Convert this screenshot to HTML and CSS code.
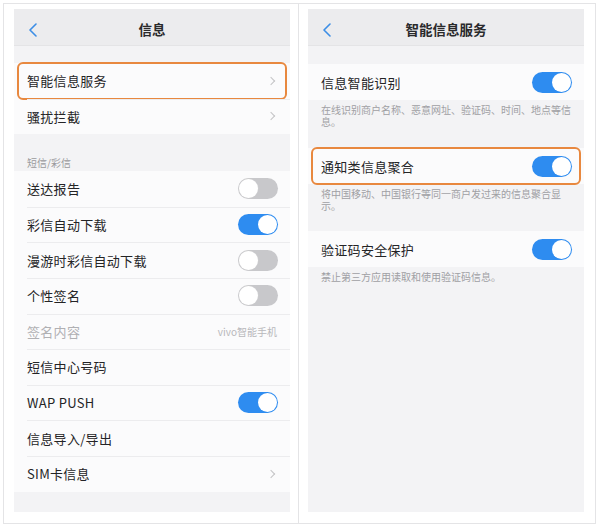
FILE: index.html
```html
<!DOCTYPE html>
<html lang="zh-CN">
<head>
<meta charset="utf-8">
<link rel="stylesheet" href="styles.css">
</head>
<body>
<div class="frame">
  <div class="panel panel-left">
    <div class="screen">
      <div class="header">
        <svg class="back" width="10" height="14" viewBox="0 0 10 14"><path d="M8 1 L2 7 L8 13" fill="none" stroke="#3c8ee6" stroke-width="1.6" stroke-linecap="round" stroke-linejoin="round"/></svg>
        <div class="title">信息</div>
      </div>
      <div class="gap-top"></div>
      <div class="group">
        <div class="row hl"><span class="label">智能信息服务</span><span class="chev"></span></div>
        <div class="row"><span class="label">骚扰拦截</span><span class="chev"></span></div>
      </div>
      <div class="section-label">短信/彩信</div>
      <div class="group">
        <div class="row"><span class="label">送达报告</span><span class="toggle"></span></div>
        <div class="row"><span class="label">彩信自动下载</span><span class="toggle on"></span></div>
        <div class="row"><span class="label">漫游时彩信自动下载</span><span class="toggle"></span></div>
        <div class="row"><span class="label">个性签名</span><span class="toggle"></span></div>
        <div class="row"><span class="label dim">签名内容</span><span class="value">vivo智能手机</span></div>
        <div class="row"><span class="label">短信中心号码</span></div>
        <div class="row"><span class="label">WAP PUSH</span><span class="toggle on"></span></div>
        <div class="row"><span class="label">信息导入/导出</span></div>
        <div class="row"><span class="label">SIM卡信息</span><span class="chev"></span></div>
      </div>
    </div>
  </div>
  <div class="panel panel-right">
    <div class="screen">
      <div class="header">
        <svg class="back" width="10" height="14" viewBox="0 0 10 14"><path d="M8 1 L2 7 L8 13" fill="none" stroke="#3c8ee6" stroke-width="1.6" stroke-linecap="round" stroke-linejoin="round"/></svg>
        <div class="title">智能信息服务</div>
      </div>
      <div class="gap-top r"></div>
      <div class="row single"><span class="label">信息智能识别</span><span class="toggle on"></span></div>
      <div class="desc first">在线识别商户名称、恶意网址、验证码、时间、地点等信息。</div>
      <div class="row single hl"><span class="label">通知类信息聚合</span><span class="toggle on"></span></div>
      <div class="desc">将中国移动、中国银行等同一商户发过来的信息聚合显示。</div>
      <div class="row single"><span class="label">验证码安全保护</span><span class="toggle on"></span></div>
      <div class="desc">禁止第三方应用读取和使用验证码信息。</div>
    </div>
  </div>
</div>
</body>
</html>
```

FILE: styles.css
```css
* { box-sizing: border-box; }
html, body { margin: 0; padding: 0; background: #ffffff; }
body {
  font-family: "Noto Sans CJK SC", "Noto Sans", sans-serif;
  color: #242426;
}
.frame {
  margin: 3px 0 0 3px;
  width: 593px;
  height: 521px;
  border: 1px solid #e4e4e6;
  display: flex;
}
.panel {
  height: 100%;
  padding-top: 5px;
}
.panel-left {
  width: 295px;
  padding-left: 10px;
  border-right: 1px solid #e4e4e6;
}
.panel-right {
  flex: 1;
  padding-left: 9px;
}
.screen {
  width: 276px;
  height: 503px;
  background: #f3f3f5;
  display: flex;
  flex-direction: column;
  overflow: hidden;
}
.header {
  position: relative;
  height: 37px;
  background: #ececee;
  border-bottom: 1px solid #e4e4e6;
  display: flex;
  align-items: center;
  justify-content: center;
  flex-shrink: 0;
}
.back {
  position: absolute;
  left: 14px;
  top: 14px;
}
.title {
  font-size: 13.5px;
  font-weight: 700;
  color: #2a2a2c;
  margin-top: 4px;
}
.gap-top { height: 17px; flex-shrink: 0; }
.gap-top.r { height: 18px; }
.group { background: #fbfbfc; flex-shrink: 0; }
.row {
  position: relative;
  height: 35.6px;
  display: flex;
  align-items: center;
  justify-content: space-between;
  padding: 0 12px 0 13px;
  font-size: 13px;
  flex-shrink: 0;
}
.group .row + .row::before {
  content: "";
  position: absolute;
  left: 13px;
  right: 0;
  top: 0;
  border-top: 1px solid #ececee;
}
.row.single { background: #fbfbfc; height: 36px; }
.row.hl::after {
  content: "";
  position: absolute;
  left: 3px;
  right: 3px;
  top: -1px;
  bottom: -1px;
  border: 2px solid #e8883f;
  border-radius: 6px;
}
.label { letter-spacing: 0.3px; }
.label.dim { color: #b0b0b3; }
.value { font-size: 10px; color: #b8b8bb; margin-right: 1px; }
.chev {
  width: 6px;
  height: 6px;
  border-top: 1.3px solid #c4c4c6;
  border-right: 1.3px solid #c4c4c6;
  transform: rotate(45deg);
  margin-right: 4px;
}
.section-label {
  height: 37px;
  padding: 21px 0 0 13px;
  font-size: 10px;
  color: #9a9a9d;
  flex-shrink: 0;
}
.toggle {
  position: relative;
  width: 40px;
  height: 21px;
  border-radius: 11px;
  background: #c8c8cb;
}
.toggle::after {
  content: "";
  position: absolute;
  top: 1px;
  left: 1px;
  width: 19px;
  height: 19px;
  border-radius: 50%;
  background: #ffffff;
  box-shadow: 0 0 0 0.5px #d0d0d2;
}
.toggle.on { background: #2e8cf0; }
.toggle.on::after { left: 20px; box-shadow: none; }
.desc {
  padding: 4px 10px 19px 13px;
  font-size: 10px;
  line-height: 12px;
  color: #a0a0a4;
  flex-shrink: 0;
}
.desc.first { padding-bottom: 20px; }
```
